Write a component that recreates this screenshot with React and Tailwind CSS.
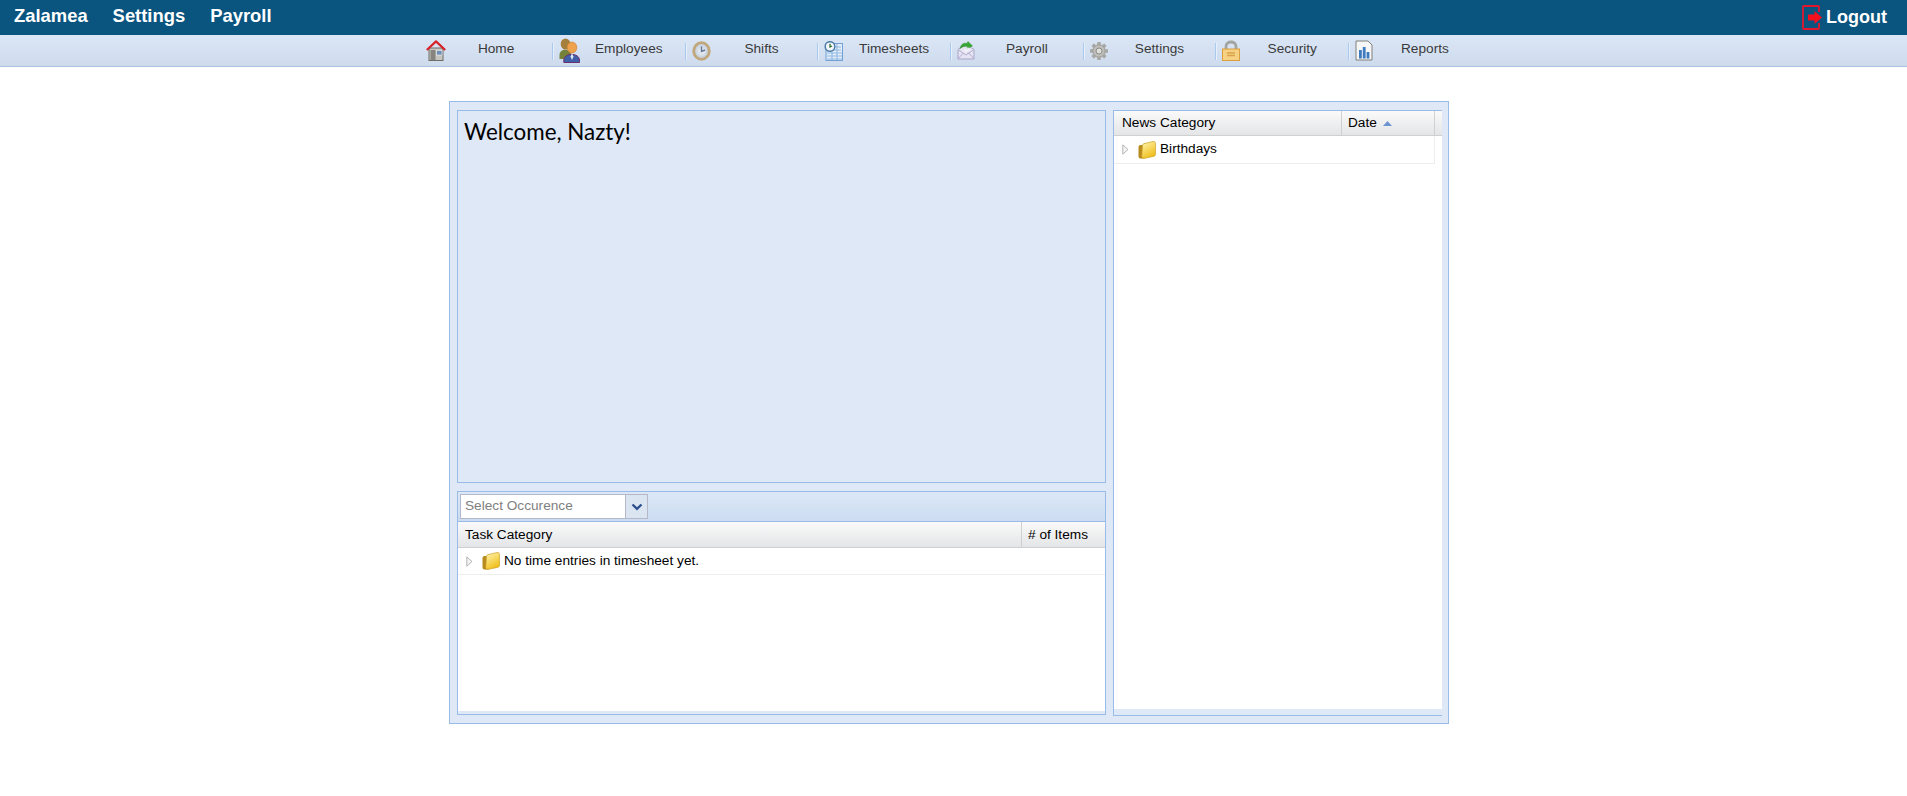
import React from "react";

const Sans = "font-['Liberation_Sans',Arial,sans-serif]";

function HomeIcon() {
  return (
    <svg width="20" height="21" viewBox="0 0 20 21">
      <rect x="3" y="8" width="14" height="12.5" fill="#c6c6c0" stroke="#6f6d67" />
      <rect x="4.5" y="10" width="5" height="10" fill="#85847e" />
      <rect x="10.5" y="10.5" width="5.5" height="4.5" fill="#6f8fb8" stroke="#eee" strokeWidth="0.6" />
      <path d="M0.8 10 L10 1.4 L19.2 10" fill="none" stroke="#d8222a" strokeWidth="2.2" strokeLinejoin="round" />
    </svg>
  );
}
function PeopleIcon() {
  return (
    <svg width="21" height="25" viewBox="0 0 21 25">
      <ellipse cx="6.5" cy="6" rx="4.8" ry="5.5" fill="#a5803c" />
      <path d="M0.5 21 V17 C0.5 10 12 10 12 17 V21 Z" fill="#75803a" />
      <ellipse cx="13" cy="9.5" rx="4.8" ry="5.5" fill="#efa24e" stroke="#c97e2c" strokeWidth="0.6" />
      <path d="M4.8 24.5 V22 C4.8 14.5 20.5 14.5 20.5 22 V24.5 Z" fill="#3f5fa8" stroke="#6a2f70" />
      <path d="M13 15.5 L11.5 18.5 L13 22 L14.5 18.5 Z" fill="#dfe6f3" />
    </svg>
  );
}
function ClockIcon() {
  return (
    <svg width="19" height="20" viewBox="0 0 19 20">
      <defs>
        <radialGradient id="clockFace">
          <stop offset="0" stopColor="#f4f6fa" />
          <stop offset="1" stopColor="#b9c7d8" />
        </radialGradient>
      </defs>
      <ellipse cx="9.5" cy="10" rx="7.8" ry="8.3" fill="url(#clockFace)" stroke="#c2a77c" strokeWidth="2.8" />
      <path d="M9.5 5.5 V10.5 L13 9" fill="none" stroke="#5f7794" strokeWidth="1.4" />
    </svg>
  );
}
function SheetIcon() {
  return (
    <svg width="19" height="20" viewBox="0 0 19 20">
      <rect x="2" y="2.5" width="16.5" height="17" fill="#e2edf9" stroke="#6f9fd4" />
      <path d="M3 12H18M3 15H18M3 18H18M8 11V19M13 3V19M10 6H17M10 9H17" stroke="#8fb8e2" strokeWidth="1.1" />
      <circle cx="6" cy="5.5" r="4.8" fill="#f3f6fa" stroke="#4d7da8" strokeWidth="1.5" />
      <path d="M6 2.8V6L8 5" fill="none" stroke="#2f6a3a" strokeWidth="1.3" />
    </svg>
  );
}
function MailIcon() {
  return (
    <svg width="18" height="19" viewBox="0 0 18 19">
      <path d="M1 8.5 L9 3.5 L17 8.5 V18 H1 Z" fill="#e6e4f2" stroke="#a9a4c9" />
      <path d="M1 17.5 L7 11.5 M17 17.5 L11 11.5 M1.5 9 L9 14 L16.5 9" fill="none" stroke="#b0abd0" />
      <path d="M3 7.5 C4 3 7 1.5 10 2.5 L11 0.5 L15.5 5 L10 7.5 L10.5 5.5 C8 4.8 5.5 5.5 3 7.5 Z" fill="#36a832" stroke="#2d8f2f" strokeWidth="0.5" />
      <path d="M5 11 L11 6 L13.5 9 L9 12 Z" fill="#f4f3f9" opacity="0.7" />
    </svg>
  );
}
function GearIcon() {
  const teeth = [0, 45, 90, 135, 180, 225, 270, 315];
  return (
    <svg width="18" height="18" viewBox="0 0 18 18">
      <g transform="translate(9 9)">
        {teeth.map((a) => (
          <rect key={a} x="-1.8" y="-9" width="3.6" height="4" fill="#a9a9a6" transform={`rotate(${a})`} />
        ))}
        <circle r="6.2" fill="#bdbdba" stroke="#9c9c99" />
        <circle r="3" fill="#dededb" stroke="#8c8c89" />
      </g>
    </svg>
  );
}
function LockIcon() {
  return (
    <svg width="18" height="21" viewBox="0 0 18 21">
      <path d="M4 10 V6.5 C4 0.5 14 0.5 14 6.5 V10" fill="none" stroke="#a3a3a0" strokeWidth="2.8" />
      <rect x="0.5" y="9" width="17" height="11.5" fill="#f7d183" stroke="#dd9e3c" />
      <path d="M5 13H13M5 15.5H13" stroke="#d9a24a" strokeWidth="1.4" />
    </svg>
  );
}
function ChartIcon() {
  return (
    <svg width="18" height="21" viewBox="0 0 18 21">
      <path d="M1 1 H13 L17 5 V20 H1 Z" fill="#f6f6f6" stroke="#7f7f7c" />
      <rect x="4" y="10" width="2.8" height="8.5" fill="#3d7ac0" />
      <rect x="7.8" y="7" width="2.8" height="11.5" fill="#3d7ac0" />
      <rect x="11.6" y="12" width="2.8" height="6.5" fill="#3d7ac0" />
    </svg>
  );
}
function LogoutIcon() {
  return (
    <svg width="21" height="25" viewBox="0 0 21 25" className="shrink-0">
      <path d="M17 7 V2 Q17 1 16 1 H2 Q1 1 1 2 V23 Q1 24 2 24 H16 Q17 24 17 23 V18" fill="none" stroke="#e2162c" strokeWidth="1.8" />
      <path d="M6 9.5 H12.5 V6 L20 12.5 L12.5 19 V15.5 H6 Z" fill="#f2101e" />
    </svg>
  );
}
function Folder({ id }) {
  return (
    <svg width="18" height="18" viewBox="0 0 18 18" className="shrink-0">
      <defs>
        <linearGradient id={id} x1="0" y1="0" x2="0.5" y2="1">
          <stop offset="0" stopColor="#fff6b4" />
          <stop offset="1" stopColor="#f0bf1c" />
        </linearGradient>
      </defs>
      <path d="M0.5 6 Q0.5 4 2.5 4 H5 L7 2 L7 17.5 H2.5 Q0.5 17.5 0.5 15.5 Z" fill="#b88a1c" />
      <path d="M4.5 4.5 Q4.5 3 6 2.6 L15 0.5 Q17.5 0.2 17.5 2.5 V13.5 Q17.5 15 15.5 15.4 L6.5 17.3 Q3.8 17.8 3.8 15.5 Z" fill={`url(#${id})`} stroke="#cda42c" strokeWidth="0.7" />
    </svg>
  );
}
function Tri() {
  return (
    <svg width="7" height="11" viewBox="0 0 7 11" className="shrink-0">
      <path d="M0.8 0.8 L6 5.5 L0.8 10.2 Z" fill="#f4f4f4" stroke="#b4b4b4" />
    </svg>
  );
}

const NAV = [
  ["Home", HomeIcon],
  ["Employees", PeopleIcon],
  ["Shifts", ClockIcon],
  ["Timesheets", SheetIcon],
  ["Payroll", MailIcon],
  ["Settings", GearIcon],
  ["Security", LockIcon],
  ["Reports", ChartIcon],
];

function NavItem({ label, Icon }) {
  return (
    <div className="flex items-center h-full w-[132.7px]">
      <span className="w-[2px] h-[17px] mt-[2px] border-l border-l-[#a9c8ee] bg-[#e6effa] shrink-0" />
      <div className="flex items-center justify-start w-[27px] h-full pl-[5px] shrink-0">
        <Icon />
      </div>
      <div className="flex-1 text-center pr-[8px] pb-[3px] text-[13.67px] text-[#3a3a3a]">{label}</div>
    </div>
  );
}

function HomeNavItem({ label, Icon }) {
  return (
    <div className="flex items-center h-full w-[132.7px]">
      <div className="flex items-center w-[29px] h-full pl-[7px] shrink-0">
        <Icon />
      </div>
      <div className="flex-1 text-center pr-[8px] pb-[3px] text-[13.67px] text-[#3a3a3a]">{label}</div>
    </div>
  );
}

function HeaderRow({ h, children }) {
  return (
    <div className={`flex ${h} shrink-0 bg-gradient-to-b from-[#fafafa] to-[#e4e5e7] border-b border-b-[#d0d0d0] text-[13.67px] text-black`}>
      {children}
    </div>
  );
}

export default function App() {
  return (
    <div className={`min-h-[796px] bg-white ${Sans}`}>
      <header className="flex items-center justify-between h-[35px] bg-[#0a5480] text-white font-bold">
        <nav className="flex gap-[25px] pl-[14px] pb-[4px] text-[18.4px]">
          <span>Zalamea</span>
          <span>Settings</span>
          <span>Payroll</span>
        </nav>
        <div className="flex items-center gap-[3px] pr-[20px] text-[18px]">
          <LogoutIcon />
          <span>Logout</span>
        </div>
      </header>

      <div className="flex justify-center h-[32px] pr-[7px] bg-gradient-to-b from-[#dbe7f6] to-[#cedbed] border-b border-b-[#a9c2e0]">
        <div className="flex items-center h-[31px]">
          {NAV.map(([label, Icon], i) =>
            i === 0 ? (
              <HomeNavItem key={label} label={label} Icon={Icon} />
            ) : (
              <NavItem key={label} label={label} Icon={Icon} />
            )
          )}
        </div>
      </div>

      <main className="flex justify-center pt-[34px] pr-[9px]">
        <div className="flex w-[1000px] h-[623px] gap-[7px] pl-[7px] pt-[8px] border border-[#99bbe8] bg-[#dfe8f6]">
          <div className="flex flex-col w-[649px] gap-[8px] h-[605px]">
            <section className="h-[373px] border border-[#99bbe8] bg-[#dfe8f6] pl-[6px] pt-[6px]">
              <h1 className="font-['Lato',sans-serif] text-[22.4px] leading-[30px] text-black">
                Welcome, Nazty!
              </h1>
            </section>
            <section className="flex flex-col h-[224px] border border-[#99bbe8] bg-[#dfe8f6]">
              <div className="flex items-center h-[30px] shrink-0 pl-[2px] bg-gradient-to-b from-[#dce8f7] to-[#ccdcf0] border-b border-b-[#99bbe8]">
                <div className="flex h-[25px] w-[188px] border border-[#b5b8c8] bg-white text-[13.67px] text-[#808080]">
                  <div className="flex-1 pl-[4px] leading-[22px]">Select Occurence</div>
                  <div className="flex items-center justify-center w-[22px] border-l border-l-[#b5b8c8] bg-[#dbe4f1]">
                    <svg width="12" height="8" viewBox="0 0 12 8">
                      <path d="M1.5 1.5 L6 5.8 L10.5 1.5" fill="none" stroke="#2f4f8f" strokeWidth="2.4" />
                    </svg>
                  </div>
                </div>
              </div>
              <HeaderRow h="h-[26px]">
                <div className="flex-1 pl-[7px] leading-[25px]">Task Category</div>
                <div className="w-[84px] pl-[6px] leading-[25px] border-l border-l-[#d0d0d0]"># of Items</div>
              </HeaderRow>
              <div className="flex-1 bg-white">
                <div className="flex items-center h-[27px] pl-[8px] border-b border-b-[#ededed] text-[13.67px] text-black">
                  <Tri />
                  <div className="ml-[9px] mr-[4px]">
                    <Folder id="foldA" />
                  </div>
                  <span>No time entries in timesheet yet.</span>
                </div>
              </div>
              <div className="h-[3px] shrink-0 bg-[#dfe8f6]" />
            </section>
          </div>

          <section className="flex flex-col w-[329px] h-[606px] border-l border-b border-t border-[#99bbe8] bg-[#dfe8f6]">
            <HeaderRow h="h-[25px]">
              <div className="w-[227px] pl-[8px] leading-[24px]">News Category</div>
              <div className="flex items-start gap-[6px] w-[94px] pl-[6px] leading-[24px] border-l border-l-[#d0d0d0] border-r border-r-[#d0d0d0]">
                <span>Date</span>
                <svg width="9" height="5" viewBox="0 0 9 5" className="mt-[10px]">
                  <path d="M0 5 L4.5 0 L9 5 Z" fill="#6c94d0" />
                </svg>
              </div>
            </HeaderRow>
            <div className="flex-1 bg-white">
              <div className="flex items-center h-[28px] w-[321px] pl-[8px] border-b border-r border-[#ededed] text-[13.67px] text-black">
                <Tri />
                <div className="ml-[9px] mr-[4px]">
                  <Folder id="foldB" />
                </div>
                <span>Birthdays</span>
              </div>
            </div>
            <div className="h-[6px] shrink-0 bg-[#dfe8f6]" />
          </section>
        </div>
      </main>
    </div>
  );
}
